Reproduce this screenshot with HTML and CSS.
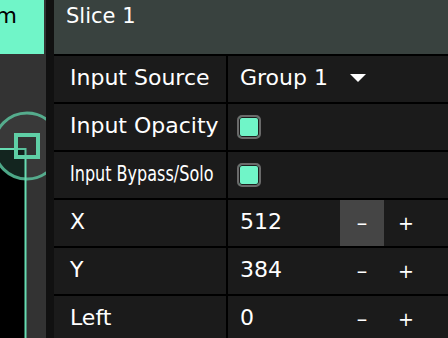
FILE: index.html
```html
<!DOCTYPE html>
<html lang="en">
<head>
    <meta charset="UTF-8">
    <meta name="viewport" content="width=device-width, initial-scale=1.0">
    <title>Slice 1</title>
    <link rel="stylesheet" href="styles.css">
</head>
<body>
    <div class="app">
        <div class="side">
            <div class="mode-btn"><span>Custom</span></div>
            <div class="canvas">
                <svg width="46" height="284" viewBox="0 0 46 284">
                    <defs>
                        <clipPath id="ring">
                            <circle cx="27" cy="92" r="34"/>
                        </clipPath>
                    </defs>
                    <rect x="0" y="94" width="26" height="190" fill="#000"/>
                    <circle cx="27" cy="92" r="34" fill="rgba(255,255,255,0.03)"/>
                    <rect x="0" y="94" width="26" height="190" fill="#13251f" clip-path="url(#ring)"/>
                    <circle cx="27" cy="92" r="33" fill="none" stroke="#5cc9a2" stroke-opacity="0.8" stroke-width="3"/>
                    <path d="M0 95H25.5V284" fill="none" stroke="#66dcb2" stroke-width="2"/>
                    <rect x="16" y="81" width="22" height="22" fill="rgba(0,0,0,0.12)" stroke="#5fcfa6" stroke-width="4"/>
                </svg>
            </div>
        </div>
        <div class="gutter"></div>
        <div class="inspector">
            <div class="title">Slice 1</div>
            <div class="props">
                <div class="label">Input Source</div>
                <div class="value">
                    <span class="select-text">Group 1</span>
                    <span class="caret"></span>
                </div>

                <div class="label">Input Opacity</div>
                <div class="value"><span class="check"></span></div>

                <div class="label"><span class="squeeze">Input Bypass/Solo</span></div>
                <div class="value"><span class="check"></span></div>

                <div class="label">X</div>
                <div class="value">
                    <span class="num">512</span>
                    <span class="step active"><span class="minus">&minus;</span></span>
                    <span class="step">+</span>
                </div>

                <div class="label">Y</div>
                <div class="value">
                    <span class="num">384</span>
                    <span class="step"><span class="minus">&minus;</span></span>
                    <span class="step">+</span>
                </div>

                <div class="label">Left</div>
                <div class="value">
                    <span class="num">0</span>
                    <span class="step"><span class="minus">&minus;</span></span>
                    <span class="step">+</span>
                </div>
            </div>
        </div>
    </div>
</body>
</html>
```

FILE: styles.css
```css
body {
    margin: 0;
    background-color: #000000;
    font-family: "DejaVu Sans", sans-serif;
    color: #ffffff;
    overflow: hidden;
}

.app {
    display: flex;
    width: 448px;
    height: 338px;
    overflow: hidden;
}

.side {
    width: 46px;
    flex-shrink: 0;
    display: flex;
    flex-direction: column;
    background-color: #333333;
}

.mode-btn {
    width: 44px;
    height: 54px;
    flex-shrink: 0;
    box-sizing: border-box;
    display: flex;
    justify-content: flex-end;
    align-items: flex-start;
    overflow: hidden;
    padding: 5px 27px 0 0;
    background-color: #70f5c8;
    color: #000000;
    font-size: 22px;
    line-height: 22px;
    white-space: nowrap;
}

.canvas {
    flex: 1;
    overflow: hidden;
}

.canvas svg {
    display: block;
}

.gutter {
    width: 8px;
    flex-shrink: 0;
    background-color: #111111;
}

.inspector {
    flex: 1;
    display: flex;
    flex-direction: column;
}

.title {
    height: 54px;
    flex-shrink: 0;
    box-sizing: border-box;
    padding: 5px 12px 0;
    background-color: #39423f;
    font-size: 21px;
    line-height: 22px;
}

.props {
    display: grid;
    grid-template-columns: 172px 1fr;
    grid-auto-rows: 46px;
    gap: 2px;
    padding-top: 2px;
    background-color: #000000;
}

.label,
.value {
    display: flex;
    align-items: center;
    background-color: #1b1b1b;
    font-size: 22px;
    line-height: 22px;
    white-space: nowrap;
}

.label {
    padding-left: 16px;
    padding-bottom: 2px;
}

.value {
    padding-left: 12px;
}

.squeeze {
    display: inline-block;
    font-family: "DejaVu Sans Condensed", "DejaVu Sans", sans-serif;
    transform: scaleX(0.81);
    transform-origin: left center;
}

.select-text {
    width: 110px;
    padding-bottom: 2px;
}

.caret {
    width: 0;
    height: 0;
    margin-top: -2px;
    border-left: 8px solid transparent;
    border-right: 8px solid transparent;
    border-top: 8px solid #ffffff;
}

.check {
    width: 24px;
    height: 24px;
    box-sizing: border-box;
    margin-left: -3px;
    border: 2px solid #6a6a6a;
    border-radius: 5px;
    background-color: #70f5c8;
    box-shadow: inset 0 0 0 1px #1e1e1e;
}

.num {
    width: 100px;
    padding-bottom: 2px;
}

.step {
    width: 44px;
    height: 46px;
    display: flex;
    justify-content: center;
    align-items: center;
    font-size: 19px;
}

.minus {
    display: inline-block;
    transform: scaleX(0.72);
}

.step.active {
    background-color: #454545;
}
```
